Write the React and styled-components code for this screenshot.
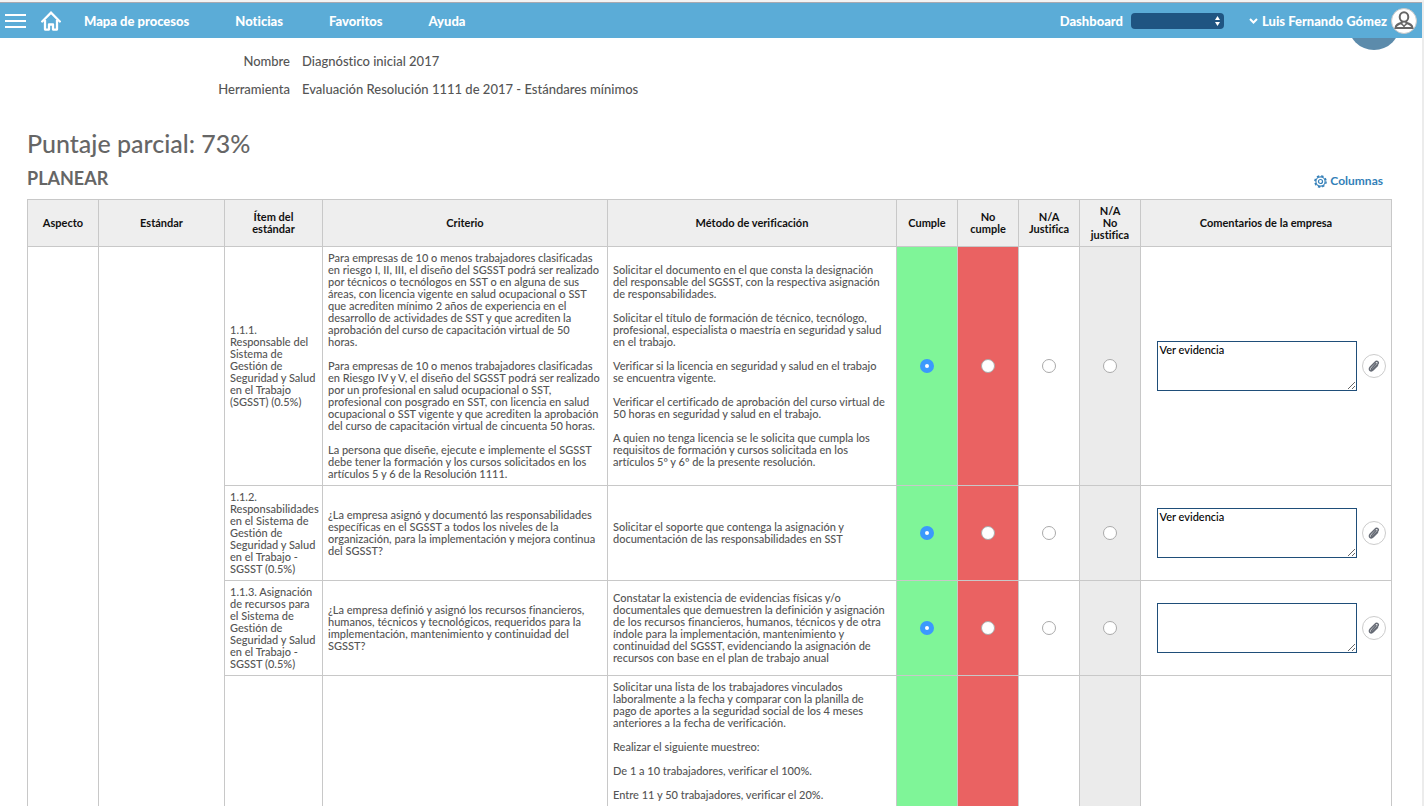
import styled, { createGlobalStyle } from "styled-components";

const columns = [
	{ label: "Aspecto", width: 71 },
	{ label: "Estándar", width: 126 },
	{ label: "Ítem del\nestándar", width: 98 },
	{ label: "Criterio", width: 285 },
	{ label: "Método de verificación", width: 289 },
	{ label: "Cumple", width: 61 },
	{ label: "No\ncumple", width: 61 },
	{ label: "N/A\nJustifica", width: 61 },
	{ label: "N/A\nNo\njustifica", width: 61 },
	{ label: "Comentarios de la empresa" },
];

const options = [
	{ label: "Cumple", color: "#7ff598" },
	{ label: "No cumple", color: "#ea6262" },
	{ label: "N/A Justifica", color: "#ffffff" },
	{ label: "N/A No justifica", color: "#ebebeb" },
];

const rows = [
	{
		id: "1.1.1",
		item: `1.1.1.
Responsable del
Sistema de
Gestión de
Seguridad y Salud
en el Trabajo
(SGSST) (0.5%)`,
		criterio: `Para empresas de 10 o menos trabajadores clasificadas
en riesgo I, II, III, el diseño del SGSST podrá ser realizado
por técnicos o tecnólogos en SST o en alguna de sus
áreas, con licencia vigente en salud ocupacional o SST
que acrediten mínimo 2 años de experiencia en el
desarrollo de actividades de SST y que acrediten la
aprobación del curso de capacitación virtual de 50
horas.

Para empresas de 10 o menos trabajadores clasificadas
en Riesgo IV y V, el diseño del SGSST podrá ser realizado
por un profesional en salud ocupacional o SST,
profesional con posgrado en SST, con licencia en salud
ocupacional o SST vigente y que acrediten la aprobación
del curso de capacitación virtual de cincuenta 50 horas.

La persona que diseñe, ejecute e implemente el SGSST
debe tener la formación y los cursos solicitados en los
artículos 5 y 6 de la Resolución 1111.`,
		metodo: `Solicitar el documento en el que consta la designación
del responsable del SGSST, con la respectiva asignación
de responsabilidades.

Solicitar el título de formación de técnico, tecnólogo,
profesional, especialista o maestría en seguridad y salud
en el trabajo.

Verificar si la licencia en seguridad y salud en el trabajo
se encuentra vigente.

Verificar el certificado de aprobación del curso virtual de
50 horas en seguridad y salud en el trabajo.

A quien no tenga licencia se le solicita que cumpla los
requisitos de formación y cursos solicitada en los
artículos 5º y 6º de la presente resolución.`,
		comentario: "Ver evidencia",
	},
	{
		id: "1.1.2",
		item: `1.1.2.
Responsabilidades
en el Sistema de
Gestión de
Seguridad y Salud
en el Trabajo -
SGSST (0.5%)`,
		criterio: `¿La empresa asignó y documentó las responsabilidades
específicas en el SGSST a todos los niveles de la
organización, para la implementación y mejora continua
del SGSST?`,
		metodo: `Solicitar el soporte que contenga la asignación y
documentación de las responsabilidades en SST`,
		comentario: "Ver evidencia",
	},
	{
		id: "1.1.3",
		item: `1.1.3. Asignación
de recursos para
el Sistema de
Gestión de
Seguridad y Salud
en el Trabajo -
SGSST (0.5%)`,
		criterio: `¿La empresa definió y asignó los recursos financieros,
humanos, técnicos y tecnológicos, requeridos para la
implementación, mantenimiento y continuidad del
SGSST?`,
		metodo: `Constatar la existencia de evidencias físicas y/o
documentales que demuestren la definición y asignación
de los recursos financieros, humanos, técnicos y de otra
índole para la implementación, mantenimiento y
continuidad del SGSST, evidenciando la asignación de
recursos con base en el plan de trabajo anual`,
		comentario: "",
	},
];

const muestreo = `Solicitar una lista de los trabajadores vinculados
laboralmente a la fecha y comparar con la planilla de
pago de aportes a la seguridad social de los 4 meses
anteriores a la fecha de verificación.

Realizar el siguiente muestreo:

De 1 a 10 trabajadores, verificar el 100%.

Entre 11 y 50 trabajadores, verificar el 20%.`;

const HomeIcon = () => (
	<svg width="20" height="20" viewBox="0 0 20 20" fill="none" stroke="#fff" strokeWidth="2.300">
		<path d="M1.200 10.500L10 1.700L18.800 10.500" strokeLinecap="round" />
		<path d="M4 9V18.600H8V13.500H12V18.600H16V9" strokeLinejoin="round" />
	</svg>
);

const UserIcon = () => (
	<svg width="20" height="20" viewBox="0 0 20 20" fill="none" stroke="#666" strokeWidth="2">
		<ellipse cx="10" cy="6" rx="4.300" ry="4.800" />
		<path d="M7.800 10.300V11.800C4 13 1.800 13.800 1.500 17H18.500C18.200 13.800 16 13 12.200 11.800V10.300" />
		<path d="M7 12.500L10 15L13 12.500M10 15V17" strokeWidth="1.500" />
	</svg>
);

const GearIcon = () => (
	<svg width="13" height="13" viewBox="0 0 13 13" fill="none" stroke="#337fb8">
		<circle cx="6.500" cy="6.500" r="5.600" strokeWidth="1.500" strokeDasharray="2.400 2" />
		<circle cx="6.500" cy="6.500" r="4.600" strokeWidth="1.100" />
		<circle cx="6.500" cy="6.500" r="2" strokeWidth="1.200" />
	</svg>
);

const ClipIcon = () => (
	<svg width="12" height="12" viewBox="0 0 12 12" fill="none" stroke="#666b75" strokeLinecap="round">
		<path d="M8 3.500L4 8Q3 9 3.800 9.500Q4.400 9.800 5.200 9L9.500 4.500Q11 2.800 9.800 1.700Q8.500 .700 7 2.200L2.300 7Q.700 9 2 10.400Q3.400 11.600 5.300 9.800L9.500 5.500" strokeWidth="1.500" />
	</svg>
);

const Comment = ({ row }) => (
	<CommentBox>
		<CommentInput aria-label={`Comentarios ${row.id}`} defaultValue={row.comentario} />
		<ClipButton type="button" aria-label="Adjuntar archivo">
			<ClipIcon />
		</ClipButton>
	</CommentBox>
);

const App = () => {
	return (
		<Page>
			<GlobalStyle />
			<TopBar>
				<MenuButton type="button" aria-label="Menú">
					<span />
					<span />
					<span />
				</MenuButton>
				<HomeLink href="#inicio" aria-label="Inicio">
					<HomeIcon />
				</HomeLink>
				<Nav>
					<a href="#mapa">Mapa de procesos</a>
					<a href="#noticias">Noticias</a>
					<a href="#favoritos">Favoritos</a>
					<a href="#ayuda">Ayuda</a>
				</Nav>
				<label htmlFor="dashboard">Dashboard</label>
				<SelectBox>
					<select id="dashboard" />
					<svg width="5" height="10" viewBox="0 0 5 10" fill="#fff">
						<path d="M0 4L2.500 0L5 4ZM0 6L2.500 10L5 6Z" />
					</svg>
				</SelectBox>
				<UserButton type="button">
					<svg width="9" height="6" viewBox="0 0 9 6" fill="none" stroke="#fff" strokeWidth="2">
						<path d="M1 1L4.500 4.500L8 1" />
					</svg>
					Luis Fernando Gómez
					<Avatar>
						<UserIcon />
					</Avatar>
				</UserButton>
				<Bubble />
			</TopBar>

			<Content>
				<Details>
					<dt>Nombre</dt>
					<dd>Diagnóstico inicial 2017</dd>
					<dt>Herramienta</dt>
					<dd>Evaluación Resolución 1111 de 2017 - Estándares mínimos</dd>
				</Details>

				<Score>Puntaje parcial: 73%</Score>
				<SectionHeader>
					<h2>PLANEAR</h2>
					<ColumnsButton type="button">
						<GearIcon />
						Columnas
					</ColumnsButton>
				</SectionHeader>

				<Table>
					<colgroup>
						{columns.map((column) => (
							<Col key={column.label} $width={column.width} />
						))}
					</colgroup>
					<thead>
						<tr>
							{columns.map((column) => (
								<th key={column.label}>{column.label}</th>
							))}
						</tr>
					</thead>
					<tbody>
						{rows.map((row, index) => (
							<tr key={row.id}>
								{index === 0 && <td rowSpan={4} />}
								{index === 0 && <td rowSpan={4} />}
								<td>{row.item}</td>
								<td>{row.criterio}</td>
								<td>{row.metodo}</td>
								{options.map((option, i) => (
									<OptionCell key={option.label} $color={option.color}>
										<Radio
											type="radio"
											name={row.id}
											aria-label={`${row.id} ${option.label}`}
											defaultChecked={i === 0}
										/>
									</OptionCell>
								))}
								<td>
									<Comment row={row} />
								</td>
							</tr>
						))}
						<LastRow>
							<td />
							<td />
							<td>{muestreo}</td>
							{options.map((option) => (
								<OptionCell key={option.label} $color={option.color} />
							))}
							<td />
						</LastRow>
					</tbody>
				</Table>
			</Content>
		</Page>
	);
};

const GlobalStyle = createGlobalStyle`
	* {
		box-sizing: border-box;
	}

	body {
		margin: 0;
		background: #fff;
		color: #555;
		font-family: "Trebuchet MS", Lato, sans-serif;
		font-weight: 500;
		font-variant-ligatures: none;
	}

	button, select, textarea {
		font: inherit;
		font-variant-ligatures: none;
	}
`;

const Page = styled.div`
	height: 100vh;
	overflow: hidden;
	border-top: 2px solid #f3f3f3;
	border-right: 2px solid #ececec;
`;

const TopBar = styled.header`
	position: relative;
	display: flex;
	align-items: center;
	height: 36px;
	padding: 0 5px;
	border-top: 1px solid #a9a9b0;
	background: #5bacd7;
	color: #fff;
	font-size: 13px;
	font-weight: 900;
`;

const MenuButton = styled.button`
	display: flex;
	flex-direction: column;
	gap: 4px;
	width: 21px;
	padding: 0;
	border: 0;
	background: none;

	span {
		height: 2px;
		background: #fff;
	}
`;

const HomeLink = styled.a`
	display: flex;
	margin: 0 23px 0 15px;
`;

const Nav = styled.nav`
	display: flex;
	flex: 1;
	gap: 46px;

	a {
		color: #fff;
		text-decoration: none;
	}
`;

const SelectBox = styled.div`
	position: relative;
	width: 93px;
	height: 16px;
	margin: 0 25px 0 8px;

	select {
		display: block;
		width: 100%;
		height: 100%;
		appearance: none;
		border: 0;
		border-radius: 4px;
		background: #1f5582;
	}

	svg {
		position: absolute;
		top: 3px;
		right: 4px;
		pointer-events: none;
	}
`;

const UserButton = styled.button`
	display: flex;
	align-items: center;
	gap: 4px;
	padding: 0;
	border: 0;
	background: none;
	color: #fff;
`;

const Avatar = styled.span`
	display: flex;
	align-items: center;
	justify-content: center;
	width: 26px;
	height: 26px;
	border: 1px solid #c8c8c8;
	border-radius: 50%;
	background: #fff;
`;

const Bubble = styled.div`
	position: absolute;
	top: 100%;
	right: 22px;
	width: 52px;
	height: 12px;
	overflow: hidden;

	&::after {
		content: "";
		display: block;
		width: 52px;
		height: 52px;
		margin-top: -40px;
		border-radius: 50%;
		background: #5c8bab;
	}
`;

const Content = styled.main`
	padding: 14px 30px 0 27px;
`;

const Details = styled.dl`
	display: grid;
	grid-template-columns: 263px 1fr;
	gap: 10px 12px;
	margin: 0 0 31px;
	font-size: 13px;
	line-height: 18px;

	dt {
		text-align: right;
	}

	dd {
		margin: 0;
	}
`;

const Score = styled.h1`
	margin: 0 0 10px;
	color: #666;
	font-size: 25px;
	font-weight: 500;
	line-height: 28px;
`;

const SectionHeader = styled.div`
	display: flex;
	align-items: flex-start;
	justify-content: space-between;
	height: 32px;
	padding-right: 9px;

	h2 {
		margin: 0;
		color: #666;
		font-size: 18px;
		line-height: 22px;
	}
`;

const ColumnsButton = styled.button`
	display: flex;
	align-items: center;
	gap: 3px;
	padding: 0;
	border: 0;
	background: none;
	color: #337fb8;
	font-size: 12px;
	font-weight: 700;
	line-height: 28px;
`;

const Table = styled.table`
	width: 100%;
	table-layout: fixed;
	border-collapse: collapse;
	font-size: 11px;
	line-height: 12px;

	th,
	td {
		padding: 5px;
		border: 1px solid #c8c8c8;
		white-space: pre;
	}

	th {
		height: 47px;
		background: #eee;
		color: #111;
	}
`;

const Col = styled.col`
	width: ${(props) => (props.$width ? `${props.$width}px` : "auto")};
`;

const OptionCell = styled.td`
	background: ${(props) => props.$color};
	text-align: center;
`;

const LastRow = styled.tr`
	height: 280px;
	vertical-align: top;
`;

const Radio = styled.input`
	appearance: none;
	display: block;
	width: 14px;
	height: 14px;
	margin: 0 auto;
	border: 1px solid #aaa;
	border-radius: 50%;
	background: #fff;

	&:checked {
		border: 5px solid #3b99fc;
	}
`;

const CommentBox = styled.div`
	display: flex;
	align-items: center;
	gap: 5px;
	justify-content: center;
	padding-left: 10px;
`;

const CommentInput = styled.textarea`
	width: 200px;
	height: 50px;
	padding: 2px;
	border: 1px solid #1f4e79;
	background: #fff;
	color: #000;
`;

const ClipButton = styled.button`
	display: flex;
	align-items: center;
	justify-content: center;
	width: 24px;
	height: 24px;
	padding: 0;
	border: 1px solid #ccc;
	border-radius: 50%;
	background: #fff;
`;

export default App;
